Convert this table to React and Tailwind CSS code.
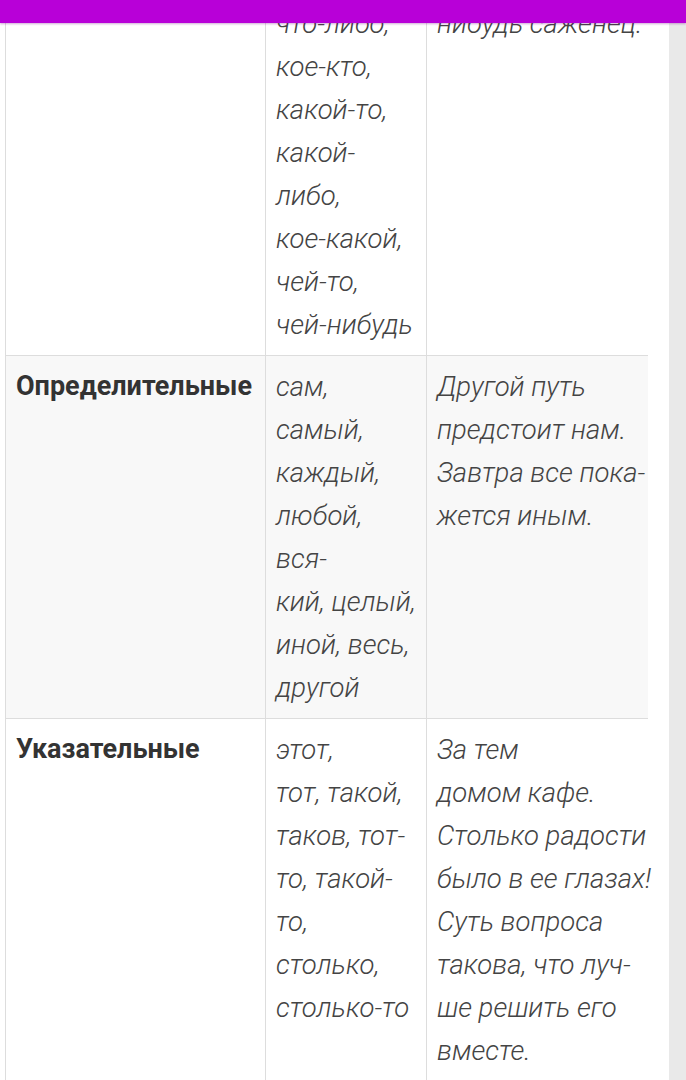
const rows = [
  {
    title: '',
    words: ['что-либо,', 'кое-кто,', 'какой-то,', 'какой-', 'либо,', 'кое-какой,', 'чей-то,', 'чей-нибудь'],
    examples: ['нибудь саженец.'],
    bg: 'bg-white',
    pad: 'pt-[2px] pb-[9px]',
  },
  {
    title: 'Определительные',
    words: ['сам,', 'самый,', 'каждый,', 'любой,', 'вся-', 'кий, целый,', 'иной, весь,', 'другой'],
    examples: ['Другой путь', 'предстоит нам.', 'Завтра все пока-', 'жется иным.'],
    bg: 'bg-[#f8f8f8]',
    pad: 'pt-[9px] pb-[9px]',
  },
  {
    title: 'Указательные',
    words: ['этот,', 'тот, такой,', 'таков, тот-', 'то, такой-', 'то,', 'столько,', 'столько-то'],
    examples: [
      'За тем',
      'домом кафе.',
      'Столько радости',
      'было в ее глазах!',
      'Суть вопроса',
      'такова, что луч-',
      'ше решить его',
      'вместе.',
    ],
    bg: 'bg-white',
    pad: 'pt-[9px] pb-[40px]',
  },
];

const Lines = ({ items }) => (
  <div className="flex flex-col">
    {items.map((line, i) => (
      <div key={i} className="h-[43px] leading-[43px] whitespace-nowrap">
        {line}
      </div>
    ))}
  </div>
);

export default function App() {
  return (
    <div className="relative h-[1080px] w-[686px] overflow-hidden bg-white font-['Roboto',sans-serif]">
      {/* top bar */}
      <div className="absolute left-0 right-0 top-0 z-10 h-[23px] bg-[#b800d8] shadow-[0_1px_2px_rgba(120,0,140,0.35)]" />

      <div className="flex h-full">
        {/* page content */}
        <div className="flex-1 bg-white">
          <div className="ml-[5px] w-[643px] text-[27px]">
            {rows.map((row, i) => (
              <div key={i} className={`flex border-b border-[#dddddd] ${row.bg}`}>
                <div className={`w-[260px] shrink-0 border-l border-[#dddddd] pl-[10px] ${row.pad}`}>
                  {row.title && (
                    <div className="h-[43px] leading-[43px] font-bold text-[#333333]">{row.title}</div>
                  )}
                </div>
                <div className={`w-[161px] shrink-0 border-l border-[#dddddd] pl-[10px] text-[27.5px] font-light italic text-[#444444] ${row.pad}`}>
                  <Lines items={row.words} />
                </div>
                <div className={`w-[222px] shrink-0 border-l border-[#dddddd] pl-[10px] text-[27.5px] font-light italic text-[#444444] ${row.pad}`}>
                  <Lines items={row.examples} />
                </div>
              </div>
            ))}
          </div>
        </div>

        {/* right gutter */}
        <div className="w-[17px] shrink-0 bg-[#e9e9e9]" />
      </div>
    </div>
  );
}
